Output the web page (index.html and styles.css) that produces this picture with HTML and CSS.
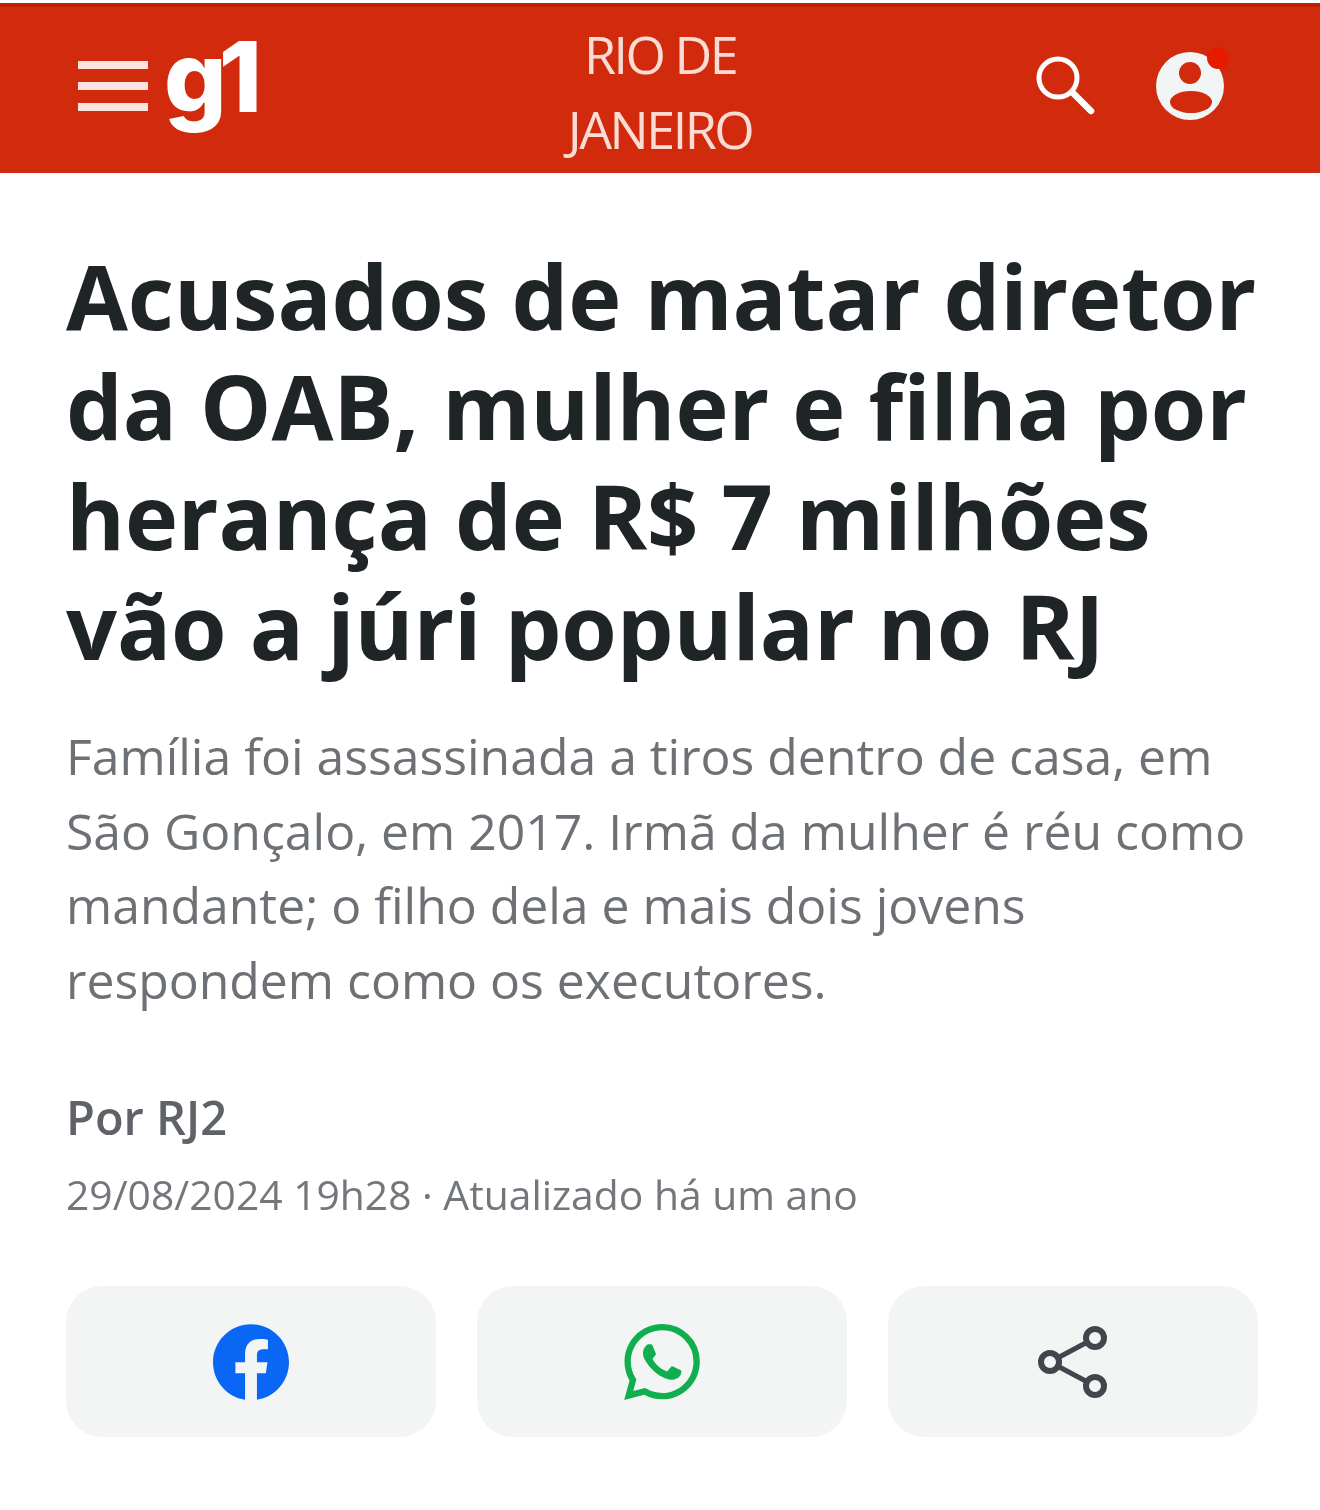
FILE: index.html
```html
<!DOCTYPE html>
<html lang="pt-BR">
<head>
  <meta charset="UTF-8">
  <meta name="viewport" content="width=device-width, initial-scale=1.0">
  <title>g1 Rio de Janeiro</title>
  <link rel="stylesheet" href="styles.css">
</head>
<body>
  <header class="topbar">
    <div class="topbar-left">
      <div class="burger"><span></span><span></span><span></span></div>
      <span class="logo">g1</span>
    </div>
    <div class="region">RIO DE<br>JANEIRO</div>
    <div class="topbar-right">
      <svg class="icon-search" viewBox="0 0 60 60" width="60" height="60">
        <circle cx="23" cy="23" r="19" fill="none" stroke="#fff" stroke-width="5"/>
        <path d="M37 37 L56 56" stroke="#fff" stroke-width="6.5" stroke-linecap="round"/>
      </svg>
      <svg class="icon-user" viewBox="0 0 74 76" width="74" height="76">
        <circle cx="34" cy="40" r="34" fill="#f1f5f6"/>
        <circle cx="34" cy="27" r="11" fill="#d12a0c"/>
        <ellipse cx="35" cy="56" rx="21" ry="11" fill="#d12a0c"/>
        <circle cx="62" cy="12" r="11" fill="#e61a00"/>
      </svg>
    </div>
  </header>

  <main class="article">
    <h1 class="headline">Acusados de matar diretor da OAB, mulher e filha por herança de R$ 7 milhões vão a júri popular no RJ</h1>
    <p class="subhead">Família foi assassinada a tiros dentro de casa, em São Gonçalo, em 2017. Irmã da mulher é réu como mandante; o filho dela e mais dois jovens respondem como os executores.</p>
    <p class="byline">Por RJ2</p>
    <p class="dateline">29/08/2024 19h28 · Atualizado há um ano</p>

    <div class="share-row">
      <div class="share-btn">
        <svg viewBox="0 0 24 24" width="76" height="76"><path fill="#0a66f5" d="M24 12.073c0-6.627-5.373-12-12-12s-12 5.373-12 12c0 5.99 4.388 10.954 10.125 11.854v-8.385H7.078v-3.47h3.047V9.43c0-3.007 1.792-4.669 4.533-4.669 1.312 0 2.686.235 2.686.235v2.953H15.83c-1.491 0-1.956.925-1.956 1.874v2.25h3.328l-.532 3.47h-2.796v8.385C19.612 23.027 24 18.062 24 12.073z"/></svg>
      </div>
      <div class="share-btn">
        <svg viewBox="0 0 24 24" width="76" height="76"><path fill="#0fae4f" d="M17.472 14.382c-.297-.149-1.758-.867-2.03-.967-.273-.099-.471-.148-.67.15-.197.297-.767.966-.94 1.164-.173.199-.347.223-.644.075-.297-.15-1.255-.463-2.39-1.475-.883-.788-1.48-1.761-1.653-2.059-.173-.297-.018-.458.13-.606.134-.133.298-.347.446-.52.149-.174.198-.298.298-.497.099-.198.05-.371-.025-.52-.075-.149-.669-1.612-.916-2.207-.242-.579-.487-.5-.669-.51-.173-.008-.371-.01-.57-.01-.198 0-.52.074-.792.372-.272.297-1.04 1.016-1.04 2.479 0 1.462 1.065 2.875 1.213 3.074.149.198 2.096 3.2 5.077 4.487.709.306 1.262.489 1.694.625.712.227 1.36.195 1.871.118.571-.085 1.758-.719 2.006-1.413.248-.694.248-1.289.173-1.413-.074-.124-.272-.198-.57-.347m-5.421 7.403h-.004a9.87 9.87 0 01-5.031-1.378l-.361-.214-3.741.982.998-3.648-.235-.374a9.86 9.86 0 01-1.51-5.26c.001-5.45 4.436-9.884 9.888-9.884 2.64 0 5.122 1.03 6.988 2.898a9.825 9.825 0 012.893 6.994c-.003 5.45-4.437 9.884-9.885 9.884m8.413-18.297A11.815 11.815 0 0012.05 0C5.495 0 .16 5.335.157 11.892c0 2.096.547 4.142 1.588 5.945L.057 24l6.305-1.654a11.882 11.882 0 005.683 1.448h.005c6.554 0 11.89-5.335 11.893-11.893a11.821 11.821 0 00-3.48-8.413z"/></svg>
      </div>
      <div class="share-btn">
        <svg viewBox="0 0 72 76" width="72" height="76" fill="none" stroke="#40464b" stroke-width="6">
          <path d="M13 38 L58 14 M13 38 L58 62" stroke-width="5"/>
          <circle cx="58" cy="14" r="9" fill="#f3f5f5"/>
          <circle cx="13" cy="38" r="9" fill="#f3f5f5"/>
          <circle cx="58" cy="62" r="9" fill="#f3f5f5"/>
        </svg>
      </div>
    </div>
  </main>
</body>
</html>
```

FILE: styles.css
```css
/* page */
body {
  margin: 0;
  background-color: #fff;
  font-family: "Open Sans", "Noto Sans", sans-serif;
  color: #1f2427;
}

/* top bar */
.topbar {
  display: grid;
  grid-template-columns: 1fr auto 1fr;
  align-items: center;
  height: 170px;
  margin-top: 3px;
  padding: 0 92px;
  background-color: #d12a0c;
  border-top: 4px solid #c02000;
  box-sizing: border-box;
  color: #fff;
  filter: blur(0.7px);
}
.topbar-left {
  display: flex;
  align-items: center;
  gap: 16px;
  margin-left: -14px;
}
.burger {
  display: flex;
  flex-direction: column;
  gap: 13px;
  width: 70px;
  margin-top: -8px;
}
.burger span {
  display: block;
  height: 8px;
  background-color: #fbe4df;
}
.logo {
  font-family: Inter, "Open Sans", sans-serif;
  font-size: 98px;
  font-weight: 800;
  line-height: 100px;
  letter-spacing: -8px;
  margin-top: -26px;
}
.region {
  font-size: 52px;
  line-height: 75px;
  letter-spacing: -2.5px;
  text-align: center;
  color: #fbdcd5;
  margin-top: 1px;
}
.topbar-right {
  display: flex;
  justify-content: flex-end;
  align-items: center;
  gap: 61px;
}
.icon-search {
  margin-top: -10px;
}
.icon-user {
  margin-top: -12px;
  margin-right: -2px;
}

/* article */
.article {
  padding: 67px 62px 0 66px;
  filter: blur(0.7px);
}
.headline {
  margin: 0 -12px 0 0;
  font-size: 89.8px;
  font-weight: 700;
  line-height: 110px;
  letter-spacing: -0.1px;
  color: #1f2427;
}
.subhead {
  margin: 39px 0 0;
  font-size: 49.9px;
  line-height: 74.5px;
  color: #6d7175;
}
.byline {
  margin: 70px 0 0;
  font-size: 47px;
  font-weight: 600;
  line-height: 60px;
  color: #5f6367;
}
.dateline {
  margin: 22px 0 0;
  font-size: 40.8px;
  line-height: 50px;
  color: #73777b;
}

/* share buttons */
.share-row {
  display: grid;
  grid-template-columns: repeat(3, 1fr);
  gap: 41px;
  margin-top: 67px;
}
.share-btn {
  display: flex;
  align-items: center;
  justify-content: center;
  height: 151px;
  background-color: #f3f5f5;
  border-radius: 36px;
}
```
